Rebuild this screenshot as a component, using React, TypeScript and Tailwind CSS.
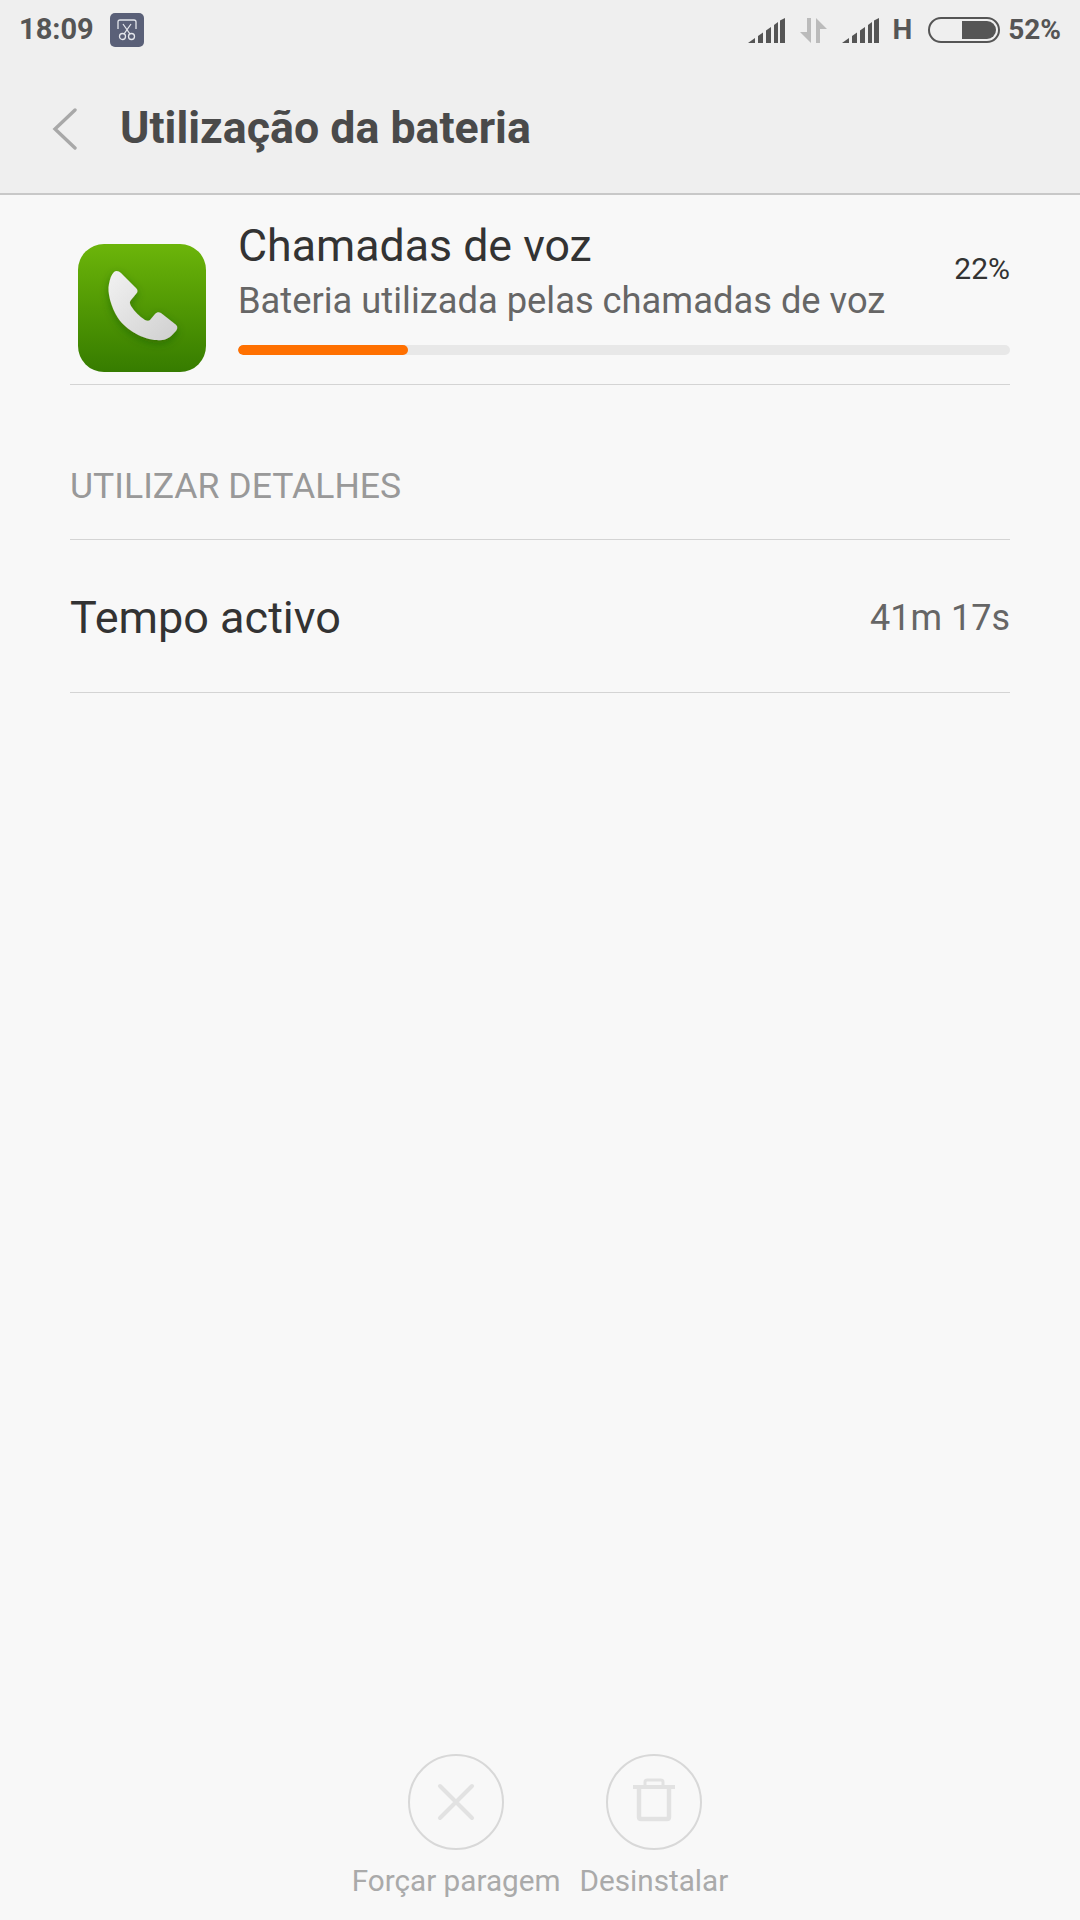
import { Fragment } from 'react'

function Signal({ className }: { className?: string }) {
  return (
    <svg width="37" height="25" viewBox="0 0 37 25" className={className}>
      <path d="M0 25 L7 20 V25 Z" fill="#555" />
      <path d="M10 18 L15 14.5 V25 H10 Z" fill="#555" />
      <path d="M18 12.5 L23 9 V25 H18 Z" fill="#555" />
      <path d="M26 7 L30 4 V25 H26 Z" fill="#555" />
      <path d="M32 2.5 L37 0 V25 H32 Z" fill="#555" />
    </svg>
  )
}

function StatusBar() {
  return (
    <div className="h-[60px] flex items-center justify-between pl-[19px] pr-[19px]">
      <div className="flex items-center gap-[16px]">
        <span className="text-[29px] font-bold text-[#555]">18:09</span>
        <div className="w-[34px] h-[34px] rounded-[5px] bg-[#5a6078] flex items-center justify-center">
          <svg width="20" height="22" viewBox="0 0 20 22" fill="none" stroke="#e4e6ec" strokeWidth="1.3">
            <path d="M1 10 V3 Q1 1 3 1 H17 Q19 1 19 3 V10" />
            <circle cx="5.5" cy="17.5" r="3" />
            <circle cx="14.5" cy="17.5" r="3" />
            <path d="M7 15 L14 5 M13 15 L6 5" />
          </svg>
        </div>
      </div>
      <div className="flex items-center">
        <Signal />
        <svg width="27" height="25" viewBox="0 0 27 25" className="ml-[15px]">
          <path d="M11 0 V25 L0 14 H7 V0 Z" fill="#bbb" />
          <path d="M16 25 V0 L27 11 H20 V25 Z" fill="#bbb" />
        </svg>
        <Signal className="ml-[15px]" />
        <span className="ml-[13px] text-[28px] font-bold text-[#555]">H</span>
        <div className="ml-[16px] w-[72px] h-[26px] rounded-full border-[2px] border-[#555] flex justify-end items-center p-[2px]">
          <div className="w-[34px] h-[18px] bg-[#555] rounded-r-full" />
        </div>
        <span className="ml-[8px] text-[28px] font-bold text-[#555]">52%</span>
      </div>
    </div>
  )
}

function Header() {
  return (
    <div className="h-[135px] flex items-center pt-[5px] border-b-[2px] border-[#c8c8c8]">
      <svg width="26" height="42" viewBox="0 0 26 42" fill="none" stroke="#a8a8a8" strokeWidth="3.4" strokeLinecap="round" className="ml-[52px]">
        <path d="M23 2 L3 21 L23 40" />
      </svg>
      <h1 className="ml-[42px] text-[44.7px] font-bold text-[#4a4a4a]">Utilização da bateria</h1>
    </div>
  )
}

function PhoneIcon() {
  return (
    <div className="w-[128px] h-[128px] rounded-[26px] bg-gradient-to-b from-[#6cb50a] to-[#367c00] flex items-center justify-center shrink-0">
      <svg width="128" height="128" viewBox="0 0 128 128">
        <defs>
          <linearGradient id="handset" x1="0" y1="0" x2="1" y2="1">
            <stop offset="0" stopColor="#f2f2f2" />
            <stop offset="1" stopColor="#cfcfcf" />
          </linearGradient>
          <filter id="soft" x="-20%" y="-20%" width="140%" height="140%">
            <feDropShadow dx="0" dy="3" stdDeviation="4" floodColor="#1f5000" floodOpacity="0.45" />
          </filter>
        </defs>
        <path
          d="M36 28 C38 26 41 27 43 29 L58 44 C60 46 60 48 58 50 L53 56 C51 58 52 60 53 62 C57 68 61 72 67 76 C69 77 71 77 72 76 L77 70 C79 68 81 68 83 69 L97 80 C100 82 100 85 97 88 C92 94 87 97 79 96 C66 96 48 86 40 74 C33 63 29 48 31 40 C32 35 33 31 36 28 Z"
          fill="url(#handset)"
          filter="url(#soft)"
        />
      </svg>
    </div>
  )
}

function AppRow() {
  return (
    <div className="mx-[70px] h-[190px] border-b-[1.5px] border-[#d4d4d4] flex">
      <div className="ml-[8px] mt-[49px]">
        <PhoneIcon />
      </div>
      <div className="ml-[32px] flex-1 flex flex-col">
        <div className="flex justify-between">
          <div>
            <div className="mt-[25px] text-[44.7px] leading-[52px] text-[#333]">Chamadas de voz</div>
            <div className="mt-[8px] text-[36.3px] leading-[42px] text-[#666]">Bateria utilizada pelas chamadas de voz</div>
          </div>
          <span className="mt-[56px] text-[30px] leading-[36px] text-[#333]">22%</span>
        </div>
        <div className="mt-[23px] h-[10px] rounded-full bg-[#e8e8e8] overflow-hidden">
          <div className="h-full rounded-full bg-[#ff7000]" style={{ width: '22%' }} />
        </div>
      </div>
    </div>
  )
}

function Footer() {
  const actions = [
    {
      label: 'Forçar paragem',
      icon: (
        <path d="M18 18 L50 50 M50 18 L18 50" stroke="#e2e2e2" strokeWidth="4" strokeLinecap="round" fill="none" />
      ),
    },
    {
      label: 'Desinstalar',
      icon: (
        <Fragment>
          <path d="M13 19 H55" stroke="#e2e2e2" strokeWidth="4" fill="none" />
          <path d="M25 18 V14 Q25 12 27 12 H41 Q43 12 43 14 V18" stroke="#e2e2e2" strokeWidth="3" fill="none" />
          <path d="M19 20 V49 Q19 51 21 51 H47 Q49 51 49 49 V20" stroke="#e2e2e2" strokeWidth="4.5" fill="none" />
        </Fragment>
      ),
    },
  ]
  return (
    <div className="flex justify-center gap-[19px] h-[166px]">
      {actions.map((a) => (
        <div key={a.label} className="flex flex-col items-center">
          <div className="w-[96px] h-[96px] rounded-full border-[2px] border-[#d8d8d8] flex items-center justify-center">
            <svg width="68" height="68" viewBox="0 0 68 68">{a.icon}</svg>
          </div>
          <span className="mt-[12px] text-[29.7px] leading-[38px] text-[#aaa]">{a.label}</span>
        </div>
      ))}
    </div>
  )
}

export default function App() {
  return (
    <div className="w-[1080px] h-[1920px] bg-[#f8f8f8] flex flex-col font-['Roboto',sans-serif]">
      <div className="bg-[#efefef]">
        <StatusBar />
        <Header />
      </div>
      <AppRow />
      <div className="mx-[70px] h-[155px] border-b-[1.5px] border-[#d4d4d4] flex items-end pb-[33px]">
        <span className="text-[35.6px] leading-[40px] text-[#999]">UTILIZAR DETALHES</span>
      </div>
      <div className="mx-[70px] h-[153px] border-b-[1.5px] border-[#d4d4d4] flex items-center justify-between pt-[3px]">
        <span className="text-[45px] text-[#333]">Tempo activo</span>
        <span className="text-[36px] text-[#666]">41m 17s</span>
      </div>
      <div className="flex-1" />
      <Footer />
    </div>
  )
}
